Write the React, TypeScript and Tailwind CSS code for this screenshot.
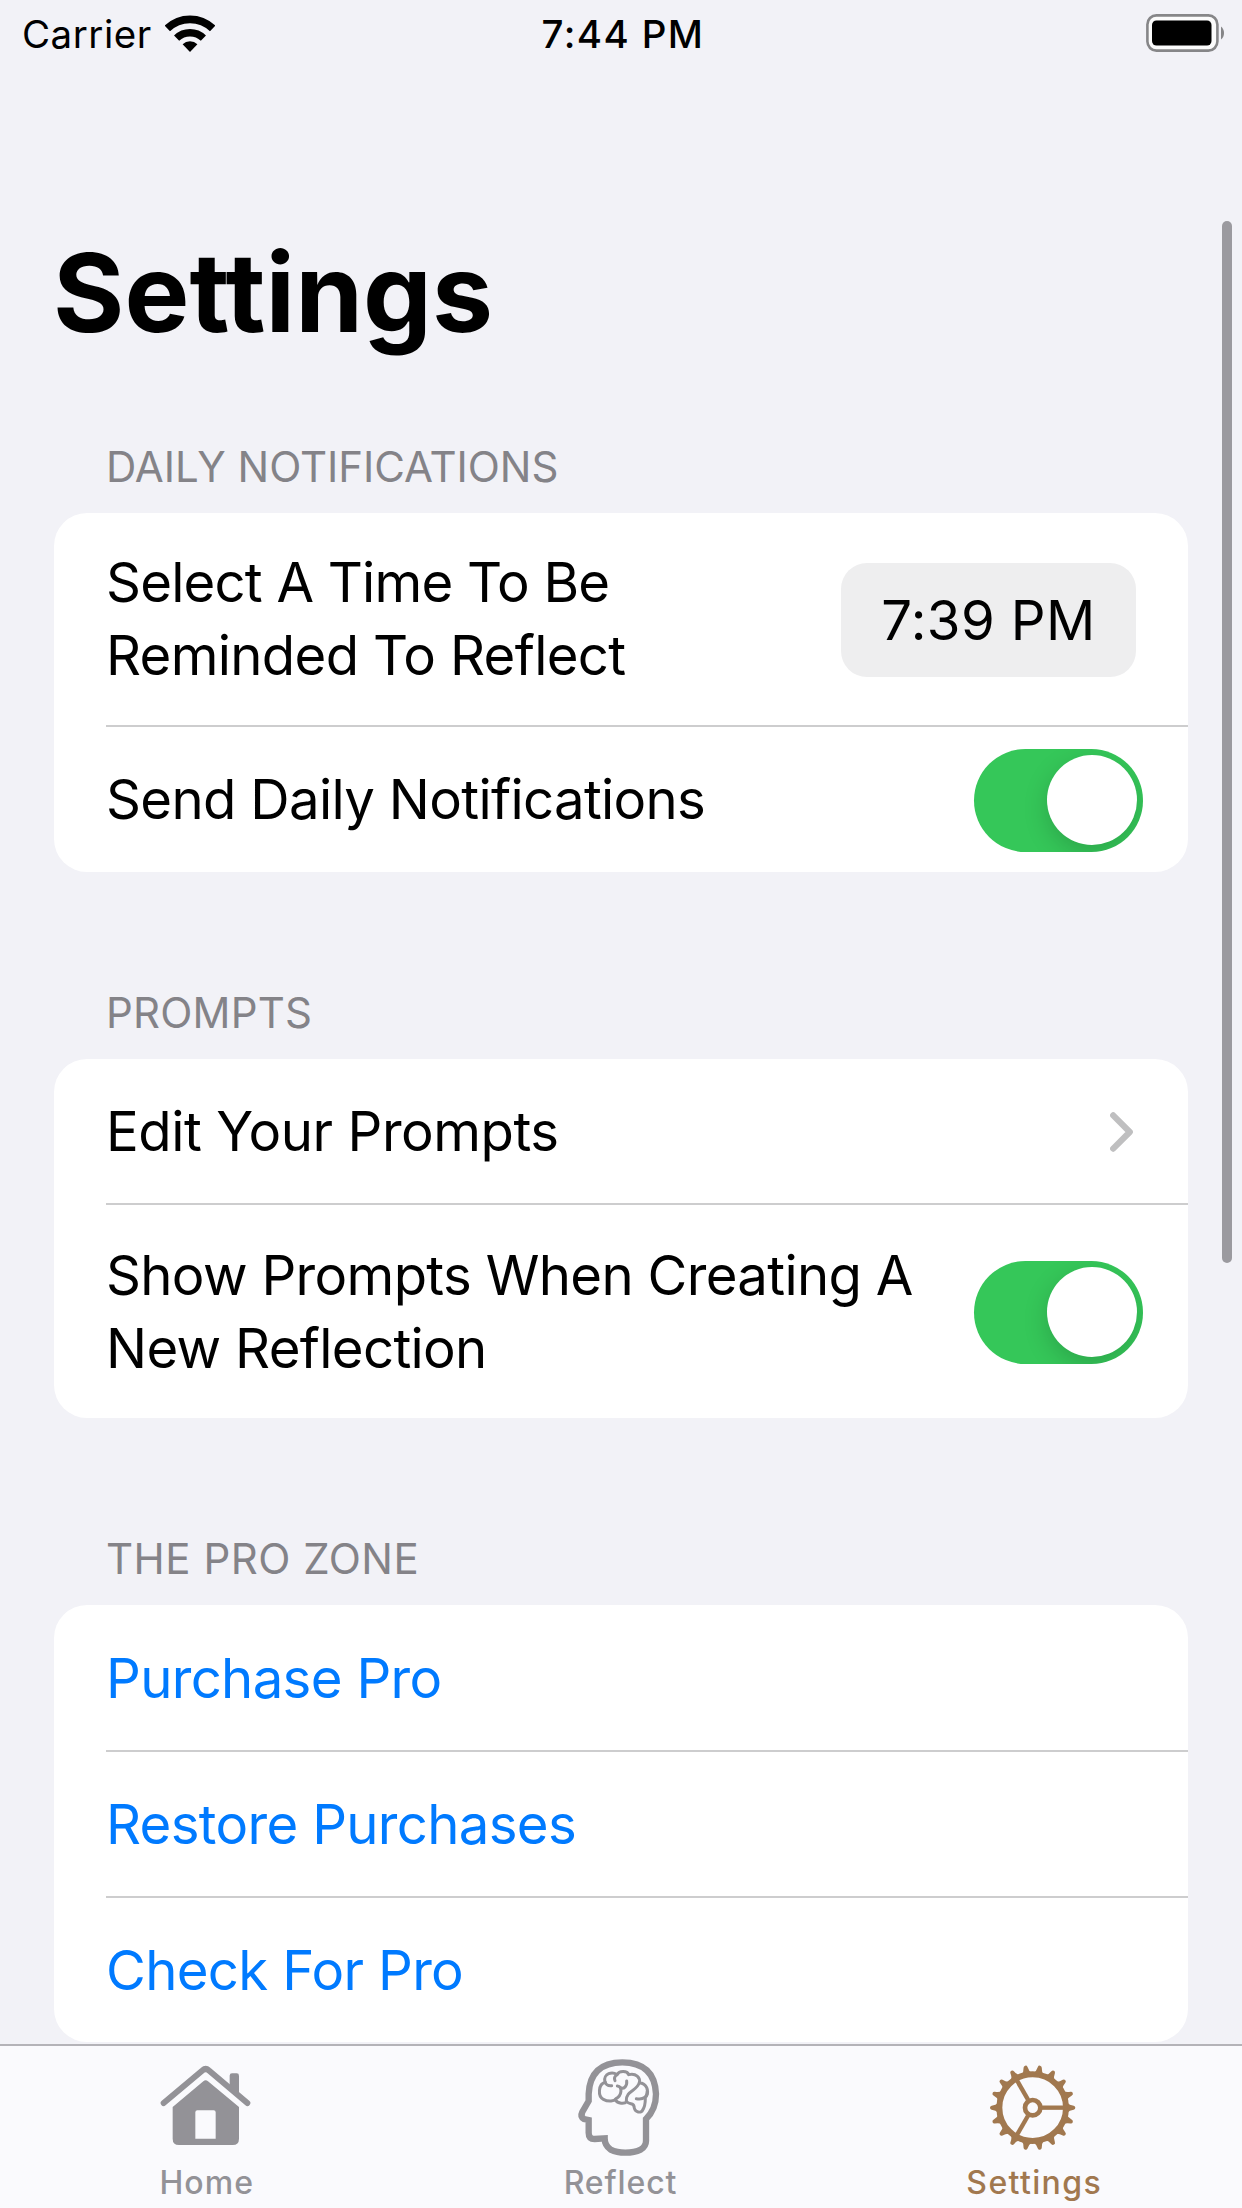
import type { ReactNode } from 'react'

function StatusBar() {
  return (
    <header className="grid h-[68px] grid-cols-3 items-center pr-[18px] pl-[22px] text-[38.5px] leading-[48px] text-black">
      <div className="flex items-center gap-[13px]">
        <span className="tracking-[0.5px]">Carrier</span>
        <svg className="mb-px h-[38px] w-[50px]" viewBox="0 0 50 38" fill="none" stroke="#000">
          <path d="M2.3 13.5A32.7 32.7 0 0 1 47.7 13.5" strokeWidth="7.8" />
          <path d="M11.6 23.1A19.3 19.3 0 0 1 38.4 23.1" strokeWidth="7.4" />
          <path d="M25 37L17.6 29.3A10.7 10.7 0 0 1 32.4 29.3Z" fill="#000" stroke="none" />
        </svg>
      </div>
      <span className="text-center font-medium tracking-[1.4px]">7:44 PM</span>
      <svg className="mb-[3px] h-[38px] w-[78px] justify-self-end" viewBox="0 0 78 38">
        <rect x="1.4" y="1.4" width="70" height="35.2" rx="9" fill="#fbfbfb" stroke="#868688" strokeWidth="2.6" />
        <rect x="6" y="6.5" width="59.5" height="25" rx="4.5" fill="#000" />
        <path d="M75 12.5Q78 15 78 19T75 25.5Z" fill="#868688" />
      </svg>
    </header>
  )
}

function Toggle() {
  return (
    <div className="mt-px flex h-[103px] w-[169px] shrink-0 items-center justify-end overflow-hidden rounded-full bg-[#35c759] pr-[6px]">
      <div className="size-[90px] rounded-full bg-white shadow-[0_8px_24px_rgba(0,0,0,0.17)]" />
    </div>
  )
}

function Section({ title, titleClass, children }: { title: string; titleClass: string; children: ReactNode }) {
  return (
    <section className="flex flex-col gap-[21px]">
      <h2 className={`pl-[52px] text-[42px] leading-[50px] text-[#848388] ${titleClass}`}>{title}</h2>
      <div className="overflow-hidden rounded-[33px] bg-white">{children}</div>
    </section>
  )
}

function Row({ className, children }: { className: string; children: ReactNode }) {
  return <div className={`flex items-center justify-between pl-[52px] ${className}`}>{children}</div>
}

function Divider() {
  return <div className="ml-[52px] h-0.5 bg-[#cdcdce]" />
}

function HomeIcon() {
  return (
    <svg className="h-[110px] w-[100px]" viewBox="81 60 300 330" fill="currentColor">
      <path d="M101 219L218 121Q227 113 236 121L352 219" fill="none" stroke="currentColor" strokeWidth="18" strokeLinecap="round" />
      <path d="M299 137Q299 130 306 130H320Q327 130 327 137V202L299 178Z" />
      <path
        fillRule="evenodd"
        d="M220 154Q227 147 234 154L327 231V326Q327 345 308 345H147Q128 345 128 326V231ZM196 247V326H257V247Q257 241 251 241H202Q196 241 196 247Z"
      />
    </svg>
  )
}

function ReflectIcon() {
  return (
    <svg className="h-[110px] w-[100px]" viewBox="93 60 300 330" fill="none" stroke="currentColor" strokeLinecap="round">
      <path
        strokeWidth="19"
        strokeLinejoin="miter"
        d="M146 270V308Q146 327 164 327L194 325Q194 347 212 359Q230 368 256 368Q284 368 302 359Q318 349 318 333V267Q348 238 348 192Q344 98 247 97Q150 98 146 192V213L127 246Q120 260 132 267Z"
      />
      <g strokeWidth="9" strokeLinejoin="round">
        <path d="M196 157C174 162 173 200 190 208C205 216 224 214 228 206C246 197 248 170 232 168" />
        <path d="M215 167C190 170 188 138 206 131C216 127 224 129 231 134C238 121 262 122 266 134C288 128 302 144 298 158C320 160 328 182 319 198" />
        <path d="M231 134Q220 141 225 152" />
        <path d="M242 174C252 178 262 168 260 153" />
        <path d="M289 206C312 210 324 198 321 186" />
        <path d="M298 158C290 184 258 182 259 212" />
        <path d="M226 209C233 222 254 222 260 215C268 225 282 217 282 230C284 249 305 250 308 240C314 232 316 218 316 205" />
      </g>
    </svg>
  )
}

const toothAngles = Array.from({ length: 18 }, (_, i) => i * 20)

function SettingsIcon() {
  return (
    <svg className="h-[110px] w-[100px]" viewBox="105 60 300 330">
      <g transform="translate(251 233)" fill="none" stroke="currentColor">
        <circle r="100" strokeWidth="18" />
        <circle r="23" strokeWidth="14" />
        {[0, 120, 240].map((angle) => (
          <path key={angle} d="M28 0H96" strokeWidth="13" transform={`rotate(${angle})`} />
        ))}
        {toothAngles.map((angle) => (
          <path key={angle} d="M104 -15Q110 -8 123 -6Q128 -5 128 0T123 6Q110 8 104 15Z" fill="currentColor" stroke="none" transform={`rotate(${angle})`} />
        ))}
      </g>
    </svg>
  )
}

function Tab({ icon, label, className }: { icon: ReactNode; label: string; className: string }) {
  return (
    <div className={`flex flex-1 flex-col items-center gap-[3px] pt-1 ${className}`}>
      {icon}
      <span className="text-[32px] leading-10 font-medium">{label}</span>
    </div>
  )
}

export default function App() {
  return (
    <div className="relative flex h-[2208px] w-[1242px] flex-col overflow-hidden bg-[#f2f2f7] font-['Inter',sans-serif] text-black">
      <StatusBar />
      <main className="flex min-h-0 flex-1 flex-col px-[54px] pt-[159px] text-[54.5px] leading-[73px] tracking-[-0.67px]">
        <h1 className="-ml-px text-[109px] leading-[130px] font-bold tracking-[0.06px]">Settings</h1>
        <div className="flex flex-col gap-[116px] pt-[85px]">
          <Section title="DAILY NOTIFICATIONS" titleClass="tracking-[-0.04px]">
            <Row className="h-[212px] pr-[53px]">
              <p>
                <span className="tracking-[-0.8px]">Select A Time To Be</span>
                <br />
                Reminded To Reflect
              </p>
              <div className="mt-0.5 -mr-px flex h-[114px] w-[295px] items-center justify-center rounded-[26px] bg-[#eeeeef] tracking-[0.4px]">
                7:39 PM
              </div>
            </Row>
            <Divider />
            <Row className="h-[145px] pr-[45px]">
              <p>Send Daily Notifications</p>
              <Toggle />
            </Row>
          </Section>
          <Section title="PROMPTS" titleClass="tracking-[0.19px]">
            <Row className="h-[144px] pt-px pr-[55px]">
              <p className="tracking-[-0.45px]">Edit Your Prompts</p>
              <svg className="h-10 w-[23px]" viewBox="0 0 23 40" fill="none" stroke="#bfbfc0" strokeWidth="6.2" strokeLinecap="round" strokeLinejoin="round">
                <path d="M3.2 3.4L19.8 20L3.2 36.6" />
              </svg>
            </Row>
            <Divider />
            <Row className="h-[213px] pr-[45px]">
              <p>
                Show Prompts When Creating A
                <br />
                New Reflection
              </p>
              <Toggle />
            </Row>
          </Section>
          <Section title="THE PRO ZONE" titleClass="tracking-[0.5px]">
            <Row className="h-[145px] pt-px text-[#007aff]">Purchase Pro</Row>
            <Divider />
            <Row className="h-[144px] text-[#007aff]">Restore Purchases</Row>
            <Divider />
            <Row className="h-[144px] text-[#007aff]">Check For Pro</Row>
          </Section>
        </div>
      </main>
      <nav className="flex h-[164px] shrink-0 border-t-2 border-[#b4b3b8] bg-[#fafafd]">
        <Tab icon={<HomeIcon />} label="Home" className="text-[#939297] tracking-[1.1px]" />
        <Tab icon={<ReflectIcon />} label="Reflect" className="text-[#939297] tracking-[0.9px]" />
        <Tab icon={<SettingsIcon />} label="Settings" className="pr-px text-[#a1784f] tracking-[1.36px]" />
      </nav>
      <div className="absolute top-[221px] right-[10px] h-[1042px] w-[10px] rounded-full bg-[#9b9a9f]" />
    </div>
  )
}
